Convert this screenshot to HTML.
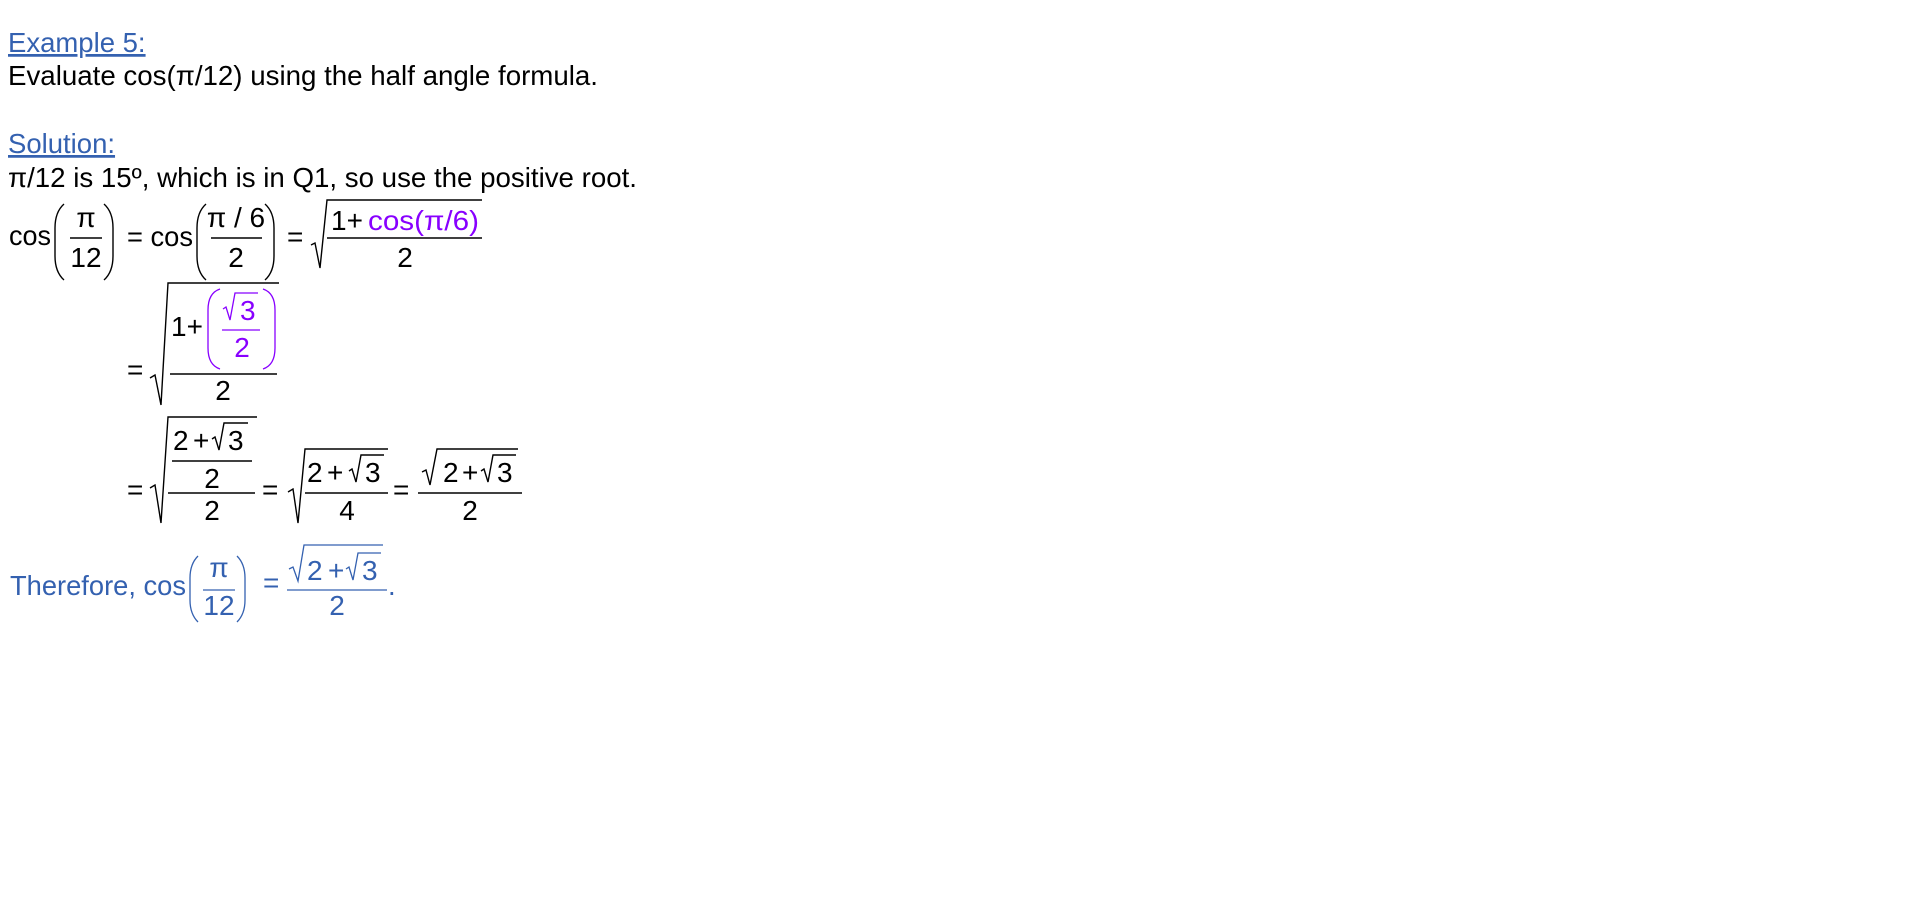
<!DOCTYPE html>
<html><head><meta charset="utf-8"><style>
html,body{margin:0;padding:0;background:#fff;width:1914px;height:903px;overflow:hidden}
svg{position:absolute;left:0;top:0}
text{font-family:"Liberation Sans",Arial,sans-serif}
</style></head><body>
<svg width="1914" height="903" viewBox="0 0 1914 903" xmlns="http://www.w3.org/2000/svg">
<g font-size="27.5">
<text x="8" y="52" fill="#3461b0" text-decoration="underline">Example 5:</text>
<text x="8" y="85" fill="#000" textLength="590" lengthAdjust="spacingAndGlyphs">Evaluate cos(π/12) using the half angle formula.</text>
<text x="8" y="153" fill="#3461b0" text-decoration="underline">Solution:</text>
<text x="8" y="187" fill="#000" textLength="629" lengthAdjust="spacingAndGlyphs">π/12 is 15º, which is in Q1, so use the positive root.</text>
</g>
<g font-size="28" fill="#000">
<!-- Row 1 -->
<text x="9" y="245" font-size="27.5" textLength="42" lengthAdjust="spacingAndGlyphs">cos</text>
<text x="86" y="227" text-anchor="middle">π</text>
<text x="86" y="267" text-anchor="middle">12</text>
<text x="127" y="246" font-size="27.5" textLength="66" lengthAdjust="spacingAndGlyphs">= cos</text>
<text x="236" y="227" text-anchor="middle">π / 6</text>
<text x="236" y="267" text-anchor="middle">2</text>
<text x="287" y="246">=</text>
<text x="331" y="230">1+</text>
<text x="368" y="230" fill="#8800ff" textLength="111" lengthAdjust="spacingAndGlyphs">cos(π/6)</text>
<text x="405" y="267" text-anchor="middle">2</text>
<!-- Row 2 -->
<text x="127" y="379">=</text>
<text x="171" y="336">1+</text>
<text x="240" y="320" fill="#8800ff">3</text>
<text x="242" y="357" fill="#8800ff" text-anchor="middle">2</text>
<text x="223" y="400" text-anchor="middle">2</text>
<!-- Row 3 -->
<text x="127" y="499">=</text>
<text x="173" y="450">2</text><text x="193" y="450">+</text><text x="228" y="450">3</text>
<text x="212" y="488" text-anchor="middle">2</text>
<text x="212" y="520" text-anchor="middle">2</text>
<text x="262" y="499">=</text>
<text x="307" y="482">2</text><text x="327" y="482">+</text><text x="365" y="482">3</text>
<text x="347" y="520" text-anchor="middle">4</text>
<text x="393" y="499">=</text>
<text x="443" y="482">2</text><text x="462" y="482">+</text><text x="497" y="482">3</text>
<text x="470" y="520" text-anchor="middle">2</text>
</g>
<g font-size="28" fill="#3461b0">
<text x="10" y="595" font-size="27.5" textLength="176" lengthAdjust="spacingAndGlyphs">Therefore, cos</text>
<text x="219" y="577" text-anchor="middle">π</text>
<text x="219" y="615" text-anchor="middle">12</text>
<text x="263" y="592">=</text>
<text x="307" y="580">2</text><text x="328" y="580">+</text><text x="362" y="580">3</text>
<text x="337" y="615" text-anchor="middle">2</text>
<text x="388" y="595" font-size="27.5">.</text>
</g>
<g stroke="#000" stroke-width="1.4" fill="none">
<line x1="70" y1="238" x2="102" y2="238"/>
<line x1="211" y1="238" x2="262" y2="238"/>
<line x1="327" y1="238" x2="482" y2="238"/>
<path d="M64,204 Q55,212 55,228 L55,256 Q55,272 64,280"/>
<path d="M104,204 Q113,212 113,228 L113,256 Q113,272 104,280"/>
<path d="M206,204 Q197,212 197,228 L197,256 Q197,272 206,280"/>
<path d="M265,204 Q274,212 274,228 L274,256 Q274,272 265,280"/>
<path d="M311,245 L315,243 L320,268 L327,200 L482,200"/>
<path d="M150,378 L155,375 L161,405 L168,283 L279,283"/>
<line x1="170" y1="374" x2="277" y2="374"/>
<path d="M150,488 L155,485 L161,523 L168,417 L257,417"/>
<line x1="172" y1="461" x2="252" y2="461"/>
<line x1="168" y1="493" x2="255" y2="493"/>
<path d="M212,439 L215,437 L219,450 L224,423 L248,423"/>
<path d="M288,492 L293,489 L298,523 L305,449 L388,449"/>
<line x1="305" y1="493" x2="388" y2="493"/>
<path d="M349,471 L352,469 L356,482 L361,455 L384,455"/>
<path d="M422,472 L426,470 L430,485 L437,449 L518,449"/>
<path d="M481,471 L484,469 L488,482 L493,455 L516,455"/>
<line x1="418" y1="493" x2="522" y2="493"/>
</g>
<g stroke="#8800ff" stroke-width="1.3" fill="none">
<path d="M220,289 Q208,293 208,310 L208,348 Q208,365 220,369"/>
<path d="M263,289 Q275,293 275,310 L275,348 Q275,365 263,369"/>
<line x1="222" y1="330" x2="260" y2="330"/>
<path d="M223,309 L226,307 L230,320 L235,293 L258,293"/>
</g>
<g stroke="#3461b0" stroke-width="1.3" fill="none">
<path d="M198,556 Q190,564 190,578 L190,600 Q190,614 198,622"/>
<path d="M237,556 Q245,564 245,578 L245,600 Q245,614 237,622"/>
<line x1="203" y1="590" x2="235" y2="590"/>
<path d="M289,569 L293,567 L298,581 L304,545 L383,545"/>
<path d="M346,569 L349,567 L353,580 L358,553 L381,553"/>
<line x1="287" y1="590" x2="387" y2="590"/>
</g>
</svg>
</body></html>
